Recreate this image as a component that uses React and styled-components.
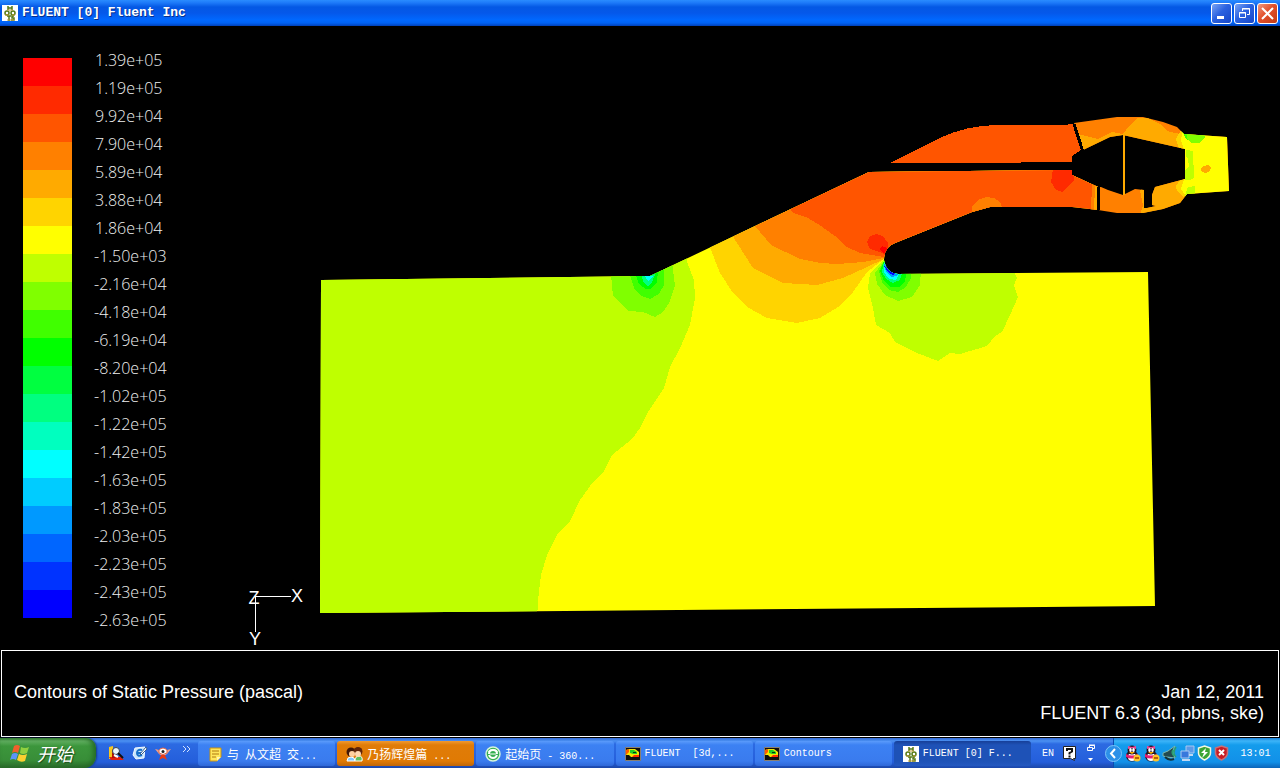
import React from "react";
import styled, { createGlobalStyle, css } from "styled-components";

const GlobalStyle = createGlobalStyle`
  * { box-sizing: border-box; }
  body { margin: 0; background: #000; font-family: "Liberation Sans", Arial, sans-serif; }
  button { font: inherit; color: inherit; padding: 0; border: 0; cursor: pointer; }
  svg { display: block; flex: none; }
`;

const mono = css`
  font-family: "Liberation Mono", "Noto Sans CJK SC", monospace;
`;

const Window = styled.div`
  min-height: 100vh;
  display: flex;
  flex-direction: column;
  background: #000;
  color: #fff;
`;

const TitleBar = styled.header`
  height: 26px;
  display: flex;
  align-items: center;
  gap: 4px;
  padding: 0 2px;
  background: linear-gradient(#2a8cff 0, #1c78f8 3px, #0458e4 7px, #0558ea 13px, #0068ff 20px, #0062f4 23px, #0040b8 26px);
`;

const Title = styled.h1`
  ${mono}
  flex: 1;
  margin: 0;
  font-size: 13px;
  line-height: 16px;
  font-weight: 700;
  text-shadow: 1px 1px 0 #06308c;
`;

const WindowButtons = styled.div`
  display: flex;
  gap: 2px;
`;

const WindowButton = styled.button`
  width: 21px;
  height: 21px;
  display: grid;
  place-items: center;
  border: 1px solid #fff;
  border-radius: 3px;
  background: ${(p) =>
    p.$close
      ? "linear-gradient(135deg, #f09a80, #e2502c 45%, #c23a14)"
      : "linear-gradient(135deg, #7aa4f4, #2b62e0 45%, #1646c8)"};
`;

const Viewport = styled.main`
  flex: 1;
  display: flex;
  align-items: flex-start;
`;

const Legend = styled.section`
  flex: none;
  width: 240px;
  display: flex;
  gap: 22px;
  padding: 20px 0 0 23px;
`;

const ColorScale = styled.div`
  width: 49px;
  padding-top: 12px;
`;

const Band = styled.div`
  height: 28px;
  background: ${(p) => p.$color};
`;

const Levels = styled.ol`
  list-style: none;
  margin: 0;
  padding: 0;
`;

const Level = styled.li`
  height: 28px;
  padding-left: ${(p) => (p.$negative ? 0 : 1)}px;
  font-family: "Open Sans", "Liberation Sans", sans-serif;
  font-size: 16px;
  font-weight: 300;
  line-height: 28px;
  color: #f0f0f0;
`;

const Plot = styled.svg`
  flex: 1;
  min-width: 0;
  height: auto;
  shape-rendering: crispEdges;
`;

const Caption = styled.footer`
  height: 87px;
  margin: 0 1px 1px;
  padding: 31px 14px 0 12px;
  border: 1px solid #fff;
  display: flex;
  align-items: flex-start;
  justify-content: space-between;
  font-size: 18px;
  line-height: 21px;
`;

const CaptionText = styled.p`
  margin: 0;
  text-align: ${(p) => (p.$right ? "right" : "left")};
`;

const Taskbar = styled.nav`
  ${mono}
  height: 30px;
  display: flex;
  align-items: stretch;
  font-size: 12px;
  background: linear-gradient(#3168d5 0, #4a90f2 3px, #2c6ae2 6px, #245edb 24px, #1c47a8 30px);
`;

const StartButton = styled.button`
  width: 96px;
  display: flex;
  align-items: center;
  gap: 7px;
  padding-left: 10px;
  border-radius: 0 10px 12px 0;
  background: linear-gradient(#3a8a3a 0, #62b062 3px, #3c963c 8px, #388e38 22px, #2a6a2a 30px);
  box-shadow: inset -3px 0 5px #256a25, 1px 0 2px #133c88;
`;

const StartText = styled.span`
  font-family: "Noto Sans CJK SC", sans-serif;
  font-size: 18px;
  line-height: 24px;
  font-weight: 400;
  font-style: italic;
  text-shadow: 1px 1px 1px #1c4c1c;
`;

const QuickLaunch = styled.div`
  width: 102px;
  display: flex;
  align-items: center;
  gap: 7px;
  padding-left: 12px;
`;

const IconButton = styled.button`
  display: grid;
  place-items: center;
  background: none;
`;

const Tasks = styled.div`
  flex: 1;
  min-width: 0;
  display: flex;
  gap: 2px;
  padding: 3px 0 2px;
`;

const taskFill = {
  normal: "linear-gradient(#5b9bfb, #3c81f3 4px, #3a7bee 20px, #2f68d8)",
  alert: "linear-gradient(#f09a30, #e07c08 4px, #e07a04 20px, #c06608)",
  active: "linear-gradient(#163f98, #1e52b7 4px, #1e52b7 20px, #2458c0)",
};

const Task = styled.button`
  flex: 1 1 0;
  min-width: 0;
  display: flex;
  align-items: center;
  gap: 4px;
  padding-left: 9px;
  border-radius: 3px;
  overflow: hidden;
  white-space: pre;
  background: ${(p) => taskFill[p.$kind]};
`;

const Latin = styled.span`
  font-size: 10px;
`;

const Language = styled.div`
  width: 82px;
  display: flex;
  align-items: center;
  gap: 9px;
  padding-left: 11px;
`;

const Tray = styled.div`
  width: 167px;
  display: flex;
  align-items: center;
  gap: 2px;
  background: linear-gradient(#1a80d8 0, #3cb4f8 3px, #149cec 7px, #1290e8 24px, #0c64b8 30px);
  border-left: 1px solid #0c4cb0;
`;

const TrayToggle = styled(IconButton)`
  width: 17px;
  margin-left: -9px;
`;

const Clock = styled.time`
  flex: 1;
  text-align: center;
  font-size: 10px;
`;

const bandColors = [
  "#ff0000", "#ff2a00", "#ff5500", "#ff8000", "#ffaa00", "#ffd400", "#ffff00",
  "#bfff00", "#80ff00", "#40ff00", "#00ff00", "#00ff40", "#00ff80", "#00ffbf",
  "#00ffff", "#00ccff", "#0099ff", "#0066ff", "#0033ff", "#0000ff",
];

const levels = [
  "1.39e+05", "1.19e+05", "9.92e+04", "7.90e+04", "5.89e+04", "3.88e+04", "1.86e+04",
  "-1.50e+03", "-2.16e+04", "-4.18e+04", "-6.19e+04", "-8.20e+04", "-1.02e+05", "-1.22e+05",
  "-1.42e+05", "-1.63e+05", "-1.83e+05", "-2.03e+05", "-2.23e+05", "-2.43e+05", "-2.63e+05",
];

function FluentIcon() {
  return (
    <svg width="16" height="16" viewBox="0 0 16 16" aria-hidden="true">
      <rect width="16" height="16" fill="#fff" />
      <g fill="none" stroke="#557a16" strokeWidth="1.5">
        <path d="M6 1v4M10 1v4M6 3h4M5 11h4M7 11v5M12 11h-2v2h2v2H9" />
        <circle cx="5" cy="8" r="2" />
        <circle cx="11" cy="8" r="2" />
      </g>
      <path d="M5 5h6M3 10h4m3 0h3M5 15h7" stroke="#c09a35" strokeWidth="1" />
    </svg>
  );
}

function ContourIcon() {
  return (
    <svg width="16" height="16" viewBox="0 0 16 16" aria-hidden="true">
      <path d="M0.500 1.500h15v13H0.500z" fill="#101010" stroke="#8a8070" />
      <path d="M1 4l3-1h6l4 3v5H6L4 9H1z" fill="#f6e800" />
      <path d="M5 4h4l3 2v2H8L5 7z" fill="#20d020" />
      <path d="M1 4l3-1v3L1 9z" fill="#ff5a00" />
      <path d="M9 9h5v2H7z" fill="#ff3000" />
      <path d="M8 6h3v1H8z" fill="#103010" />
    </svg>
  );
}

function NoteIcon() {
  return (
    <svg width="16" height="16" viewBox="0 0 16 16" aria-hidden="true">
      <path d="M3 2h11v9l-4 4H3z" fill="#ffe65c" stroke="#c99212" />
      <path d="M5 5h7M5 8h7M5 11h4" stroke="#b07a10" />
      <path d="M10 15v-4h4z" fill="#fff6b0" />
    </svg>
  );
}

function PeopleIcon() {
  return (
    <svg width="17" height="16" viewBox="0 0 17 16" aria-hidden="true">
      <path d="M1 15q0-4 4-4t4 4z" fill="#80c8ff" stroke="#fff" />
      <path d="M9 15q0-5 4-5t3 5z" fill="#60c060" stroke="#fff" />
      <circle cx="5" cy="6" r="4.5" fill="#401808" />
      <circle cx="12" cy="5.500" r="4.500" fill="#602408" />
      <ellipse cx="6" cy="8" rx="3" ry="3" fill="#ffd0a0" />
      <ellipse cx="12" cy="8" rx="3" ry="3" fill="#ffd8b0" />
    </svg>
  );
}

function BrowserIcon() {
  return (
    <svg width="16" height="16" viewBox="0 0 16 16" aria-hidden="true">
      <circle cx="8" cy="8" r="7" fill="#34ae50" stroke="#d6f4dc" strokeWidth="1.500" />
      <path d="M3 6q5-5 10 0" stroke="#b8f0b0" strokeWidth="1.500" fill="none" />
      <path d="M4 8q0-4 4-4t4 4M4 9q1 3 4 3t4-3" stroke="#fff" strokeWidth="2" fill="none" />
      <path d="M5 8h6" stroke="#fff" strokeWidth="1" />
    </svg>
  );
}

function WindowsLogo() {
  return (
    <svg width="20" height="18" viewBox="0 0 20 18" aria-hidden="true">
      <path d="M4 2q3-2 6 0L8 9Q5 7 2 9z" fill="#f0602c" />
      <path d="M11 3q4 2 8 0l-2 6q-4 2-7 0z" fill="#90d040" />
      <path d="M2 10q3-2 6 0l-2 6q-3-2-6 0z" fill="#5c94f8" />
      <path d="M9 10q4 2 8 0l-2 7q-4 2-8-1z" fill="#fcd030" />
    </svg>
  );
}

function ViewerIcon() {
  return (
    <svg width="17" height="16" viewBox="0 0 17 16" aria-hidden="true">
      <path d="M1 2l4-1v13H1z" fill="#f8c820" />
      <path d="M1 12h12l3 3H3z" fill="#e02010" />
      <path d="M4 13V5l3-3v11" fill="#b01008" />
      <circle cx="8" cy="6" r="3.500" fill="#e8f6ff" stroke="#345" />
      <path d="M10 8l5 5" stroke="#111" strokeWidth="2" />
      <path d="M6 10l4 2" stroke="#fff" strokeWidth="2" />
    </svg>
  );
}

function DesktopIcon() {
  return (
    <svg width="16" height="16" viewBox="0 0 16 16" aria-hidden="true">
      <path d="M3 3l10-1-1 11-8 1-3-4z" fill="#c8e4fc" stroke="#f4fbff" />
      <path d="M10 5q-5-1-5 3t5 2M6 8h5" fill="none" stroke="#1770c8" strokeWidth="2" />
      <path d="M8 9l6-7 1 2-6 6z" fill="#fff" stroke="#345e90" />
    </svg>
  );
}

function BirdIcon() {
  return (
    <svg width="16" height="16" viewBox="0 0 16 16" aria-hidden="true">
      <path d="M0 4l4 1q4-4 8 0l4-1-4 5q-4 3-8 0z" fill="#f0a088" />
      <path d="M4 5q4-4 8 0v3q-4 3-8 0z" fill="#fff" stroke="#d86048" />
      <circle cx="8" cy="6.500" r="1.500" fill="#202020" />
      <path d="M6 10h4l2 5-4-2-4 2z" fill="#e83c18" />
    </svg>
  );
}

function PenguinIcon() {
  return (
    <svg width="17" height="17" viewBox="0 0 17 17" aria-hidden="true">
      <ellipse cx="8" cy="11" rx="6" ry="5.500" fill="#241828" />
      <ellipse cx="8" cy="12" rx="4" ry="4" fill="#fff" />
      <circle cx="8" cy="5" r="4.500" fill="#201420" />
      <path d="M4 1l4 1 4-1v3L8 3 4 4z" fill="#f04898" />
      <ellipse cx="6.500" cy="5" rx="1.300" ry="2" fill="#fff" />
      <ellipse cx="9.500" cy="5" rx="1.300" ry="2" fill="#fff" />
      <path d="M5 7h6l-3 2z" fill="#ffae00" />
      <path d="M2 9q6 3 12 0v3q-6 3-12 0z" fill="#e81c70" />
      <circle cx="13" cy="13" r="3.500" fill="#ffc428" />
      <path d="M11 13h4" stroke="#a04000" strokeWidth="1.500" />
    </svg>
  );
}

function SoundIcon() {
  return (
    <svg width="16" height="16" viewBox="0 0 16 16" aria-hidden="true">
      <path d="M1 8l5-2 7-5q-4 6 0 12l-8-1-4-1z" fill="#234a50" stroke="#79b8b0" />
      <path d="M14 2q-4 6 0 10M11 5q-2 3 1 6" stroke="#2ca070" strokeWidth="1.500" fill="none" />
      <path d="M3 12q4 4 9 2" stroke="#143238" strokeWidth="2" fill="none" />
    </svg>
  );
}

function NetworkIcon() {
  return (
    <svg width="15" height="16" viewBox="0 0 15 16" aria-hidden="true">
      <path d="M6 1h8v7H6z" fill="#5c9ae8" stroke="#a8c8f0" />
      <path d="M1 6h8v7H1z" fill="#3878dc" stroke="#a8c8f0" />
      <path d="M2 15h8M9 10h4" stroke="#c0d8f4" strokeWidth="2" />
    </svg>
  );
}

function ShieldIcon({ danger }) {
  return (
    <svg width="15" height="16" viewBox="0 0 15 16" aria-hidden="true">
      <path
        d="M7.500 1l6 2v5q0 4-6 7-6-3-6-7V3z"
        fill={danger ? "#c81c24" : "#3ca434"}
        stroke={danger ? "#c87078" : "#f4f8e0"}
        strokeWidth="1.500"
      />
      {danger ? (
        <path d="M5 5l5 5m0-5l-5 5" stroke="#fff" strokeWidth="2" />
      ) : (
        <path d="M9 3L4 8h3l-2 5 6-6H8z" fill="#fff" />
      )}
    </svg>
  );
}

function PressurePlot() {
  return (
    <Plot viewBox="240 26 1040 624" role="img" aria-label="Contours of static pressure">
      <defs>
        <clipPath id="domain">
          <path d="M321 280L650 276L869 172L1072 170V175L1098 187V210L1072 207H990L972 212L895 243Q884 247 884 260Q886 273 898 274L1148 272L1155 606L320 613Z" />
        </clipPath>
        <clipPath id="nozzle">
          <path d="M1074 123L1117 117H1143L1163 122L1177 127L1184 134L1227 137L1229 191L1187 194L1180 203L1163 209L1143 213H1117L1098 210V187H1101L1108 190L1123 195L1135 189L1144 190V208H1147L1156 206L1152 205V195L1155 187L1185 179V149L1123 135L1110 137L1083 150Z" />
        </clipPath>
      </defs>

      <g clipPath="url(#domain)">
        <path d="M300 150H1180V630H300Z" fill="#ffff00" />
        <path d="M300 260L684 240L687 262L694 280L695 298L690 325L680 348L670 367L664 388L648 412L640 428L632 439L612 455L603 473L593 482L580 500L570 521L558 533L547 555L541 575L538 600L537 620H300Z" fill="#bfff00" />
        <path d="M611 275L613 296L628 311L643 312L655 317L663 312L669 303L675 286L672 262H630Z" fill="#80ff00" />
        <path d="M630 275L634 288L641 296L650 299L659 294L664 285V265H640Z" fill="#40ff00" />
        <path d="M636 275L639 284L646 289H651L657 282L658 270H640Z" fill="#00ff00" />
        <path d="M641 275L644 283L648 286L652 282L655 275L650 270Z" fill="#00ff80" />
        <path d="M644 275L648 281L653 276Z" fill="#00ffff" />

        <path d="M709 245L720 273L733 293L747 307L767 318L797 323L820 318L838 307L853 292L867 272L884 259L1098 200V160H869Z" fill="#ffd400" />
        <path d="M732 235L753 268L783 283L817 285L843 278L867 267L884 259L1098 200V160H869Z" fill="#ffaa00" />
        <path d="M755 226L771 245L800 259L820 263L837 264L863 262L884 258L1098 200V160H869Z" fill="#ff8000" />
        <path d="M788 205L793 213L808 218L821 226L835 236L847 247L860 253L884 257L1098 240V160H869Z" fill="#ff5500" />
        <path d="M867 242L870 236L876 234L883 236L888 243L887 257L882 253L870 249Z" fill="#ff2a00" />
        <path d="M879 249L882 246L887 248V255L884 253Z" fill="#ff0000" />
        <path d="M972 213V206L978 200L986 197L994 198L1000 202L1003 209Z" fill="#ff8000" />
        <path d="M1053 169L1051 182L1056 190L1062 192L1068 187L1074 180V169Z" fill="#ff2a00" />
        <path d="M1092 182H1100V212H1091Z" fill="#ff8000" />
        <path d="M1095 184H1100V212H1094Z" fill="#ffaa00" />

        <path d="M884 259L870 273L868 288L873 308L876 325L890 333L895 342L917 353L938 361L950 353L960 354L987 346L995 336L1002 332L1010 315L1018 297L1014 285L1017 278L1012 268H890Z" fill="#bfff00" />
        <path d="M884 261L875 273L877 284L885 295L898 301L912 297L920 285L921 270Z" fill="#80ff00" />
        <path d="M884 261L879 271L882 282L889 290L898 292L906 287L911 278V268Z" fill="#40ff00" />
        <path d="M884 261L880 271L884 281L891 287L899 287L905 282L907 268Z" fill="#00ff00" />
        <path d="M884 262L882 272L886 279L893 283L900 280L904 268Z" fill="#00ff80" />
        <path d="M884 263V272L889 279L896 280L902 268Z" fill="#00ffff" />
        <path d="M884 264L886 272L892 277L898 275V268Z" fill="#0099ff" />
        <path d="M884 266L888 272L893 275L897 272Z" fill="#0000ff" />
      </g>

      <path d="M890 163L942 137Q966 126 995 125H1062L1073 124L1081 150L1072 156V162L970 163Z" fill="#ff5500" />

      <g clipPath="url(#nozzle)">
        <path d="M1070 110H1235V220H1070Z" fill="#ff8000" />
        <path d="M1078 134L1098 139L1112 132L1123 134L1130 125L1137 118H1148L1162 125L1167 131L1184 135V153L1124 138L1083 152Z" fill="#ffaa00" />
        <path d="M1140 190L1156 182L1186 176V200L1172 209L1140 215L1143 205Z" fill="#ffaa00" />
        <path d="M1181 130L1176 139L1179 148L1190 153V132ZM1180 180L1176 186L1177 191L1184 197L1190 190V178Z" fill="#ffd400" />
        <path d="M1183 128H1235V198H1187L1181 189L1184 180V150L1181 140Z" fill="#ffff00" />
        <path d="M1182 132L1190 133V138L1187 140Z" fill="#40ff00" />
        <path d="M1187 134L1205 135V138L1199 143H1191L1187 139Z" fill="#80ff00" />
        <path d="M1186 150L1193 151L1194 178L1190 180H1185Z" fill="#bfff00" />
        <path d="M1185 156L1188 159L1189 166L1185 170Z" fill="#ffff00" />
        <path d="M1188 187L1195 186V196H1185Z" fill="#bfff00" />
        <path d="M1201 169L1203 166L1208 165L1211 167L1210 171L1206 173L1202 172Z" fill="#ffaa00" />
      </g>
      <path d="M1123 135H1125V195H1123Z" fill="#ffaa00" />
      <path d="M1074 124L1083 152M1099 187L1098 211" stroke="#000" strokeWidth="3" />

      <path d="M255 596H291M255 596V632" stroke="#fff" />
      <g fill="#fff" fontFamily="Liberation Sans, Arial, sans-serif" fontSize="18" textAnchor="middle">
        <text x="254" y="604">Z</text>
        <text x="297" y="602">X</text>
        <text x="255" y="645">Y</text>
      </g>
    </Plot>
  );
}

export default function App() {
  return (
    <Window>
      <GlobalStyle />
      <TitleBar>
        <FluentIcon />
        <Title>FLUENT [0] Fluent Inc</Title>
        <WindowButtons>
          <WindowButton aria-label="Minimize">
            <svg width="15" height="15" viewBox="0 0 15 15"><path d="M3 10h7v3H3z" fill="#fff" /></svg>
          </WindowButton>
          <WindowButton aria-label="Restore">
            <svg width="15" height="15" viewBox="0 0 15 15" fill="none" stroke="#fff">
              <path d="M5.500 5V2.500h7v6H10M5 3h8M2.500 6.500h6v5h-6zM2 7h7" />
            </svg>
          </WindowButton>
          <WindowButton $close aria-label="Close">
            <svg width="15" height="15" viewBox="0 0 15 15"><path d="M2 2l11 11M13 2L2 13" stroke="#fff" strokeWidth="2" /></svg>
          </WindowButton>
        </WindowButtons>
      </TitleBar>

      <Viewport>
        <Legend aria-label="Pressure scale">
          <ColorScale>
            {bandColors.map((color) => <Band key={color} $color={color} />)}
          </ColorScale>
          <Levels>
            {levels.map((level) => (
              <Level key={level} $negative={level.startsWith("-")}>{level}</Level>
            ))}
          </Levels>
        </Legend>
        <PressurePlot />
      </Viewport>

      <Caption>
        <CaptionText>Contours of Static Pressure (pascal)</CaptionText>
        <CaptionText $right>Jan 12, 2011<br />FLUENT 6.3 (3d, pbns, ske)</CaptionText>
      </Caption>

      <Taskbar>
        <StartButton><WindowsLogo /><StartText>开始</StartText></StartButton>
        <QuickLaunch>
          <IconButton aria-label="Image viewer"><ViewerIcon /></IconButton>
          <IconButton aria-label="Show desktop"><DesktopIcon /></IconButton>
          <IconButton aria-label="Messenger"><BirdIcon /></IconButton>
          <IconButton aria-label="More shortcuts">
            <svg width="18" height="16" viewBox="0 0 18 16" fill="none" stroke="#cfe2ff">
              <path d="M5 1l3 3-3 3M9 1l3 3-3 3" />
            </svg>
          </IconButton>
        </QuickLaunch>
        <Tasks>
          <Task $kind="normal"><NoteIcon /><span>与<Latin> </Latin>从文超<Latin> </Latin>交<Latin>...</Latin></span></Task>
          <Task $kind="alert"><PeopleIcon /><span>乃扬辉煌篇<Latin> ...</Latin></span></Task>
          <Task $kind="normal"><BrowserIcon /><span>起始页<Latin> - 360...</Latin></span></Task>
          <Task $kind="normal"><ContourIcon /><Latin>{"FLUENT  [3d,..."}</Latin></Task>
          <Task $kind="normal"><ContourIcon /><Latin>Contours</Latin></Task>
          <Task $kind="active"><FluentIcon /><Latin>FLUENT [0] F...</Latin></Task>
        </Tasks>
        <Language>
          <Latin>EN</Latin>
          <IconButton aria-label="Input help">
            <svg width="14" height="16" viewBox="0 0 14 16">
              <path d="M0.500 1.500h12v12h-2l1 2-4-2h-7z" fill="#fff" stroke="#222" />
              <path d="M4 6V4h5v2.500L6.500 8v1.500M6.500 10.500v2" fill="none" stroke="#111" strokeWidth="2" />
            </svg>
          </IconButton>
          <IconButton aria-label="Language bar options">
            <svg width="10" height="18" viewBox="0 0 10 18">
              <path d="M3.500 3V1.500h5v3H7M3 1h6M1.500 3.500h5v3h-5z" fill="none" stroke="#fff" />
              <path d="M2 14h5l-2.500 3z" fill="#fff" />
            </svg>
          </IconButton>
        </Language>
        <Tray>
          <TrayToggle aria-label="Show hidden icons">
            <svg width="17" height="17" viewBox="0 0 17 17">
              <circle cx="8.500" cy="8.500" r="8" fill="#2c90e8" stroke="#7cc4f8" />
              <path d="M10 4L6 8.500l4 4.500" fill="none" stroke="#fff" strokeWidth="2" />
            </svg>
          </TrayToggle>
          <PenguinIcon />
          <PenguinIcon />
          <SoundIcon />
          <NetworkIcon />
          <ShieldIcon />
          <ShieldIcon danger />
          <Clock>13:01</Clock>
        </Tray>
      </Taskbar>
    </Window>
  );
}
